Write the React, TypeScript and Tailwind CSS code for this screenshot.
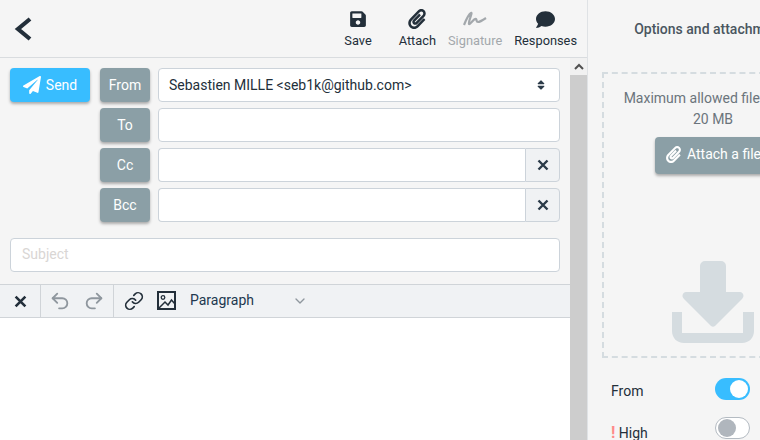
import React from "react"
import { FaComment, FaPaperPlane, FaPaperclip, FaSave, FaSort } from "react-icons/fa"
import { LuChevronDown, LuLink, LuRedo2, LuUndo2 } from "react-icons/lu"

const fieldBorder = "border border-[#ccd3da]"

function HeaderAction({
  icon,
  label,
  disabled,
  className = "",
}: {
  icon: React.ReactNode
  label: string
  disabled?: boolean
  className?: string
}) {
  return (
    <button
      className={`flex flex-col items-center text-[12.8px] ${disabled ? "text-[#a3a8ac]" : "text-[#232f3a]"} ${className}`}
    >
      <span className="flex h-[20px] items-center">{icon}</span>
      <span className="mt-[4px] leading-[16px]">{label}</span>
    </button>
  )
}

function CloseIcon({ size }: { size: number }) {
  return (
    <svg width={size} height={size} viewBox="0 0 12 12" fill="none" stroke="currentColor" strokeWidth="2.4">
      <path d="M1.500 1.500l9 9M10.500 1.500l-9 9" />
    </svg>
  )
}

function FieldLabel({ children }: { children: React.ReactNode }) {
  return (
    <div className="flex h-[34px] w-[50px] shrink-0 items-center justify-center rounded-[4px] bg-[#8b9fa6] text-sm text-white shadow-[0_2px_3px_rgba(0,0,0,0.3)]">
      {children}
    </div>
  )
}

function Row({ label, children }: { label: string; children?: React.ReactNode }) {
  return (
    <div className="flex gap-2">
      <FieldLabel>{label}</FieldLabel>
      <div className="flex h-[34px] flex-1">{children ?? <div className={`flex-1 rounded-[4px] bg-white ${fieldBorder}`} />}</div>
    </div>
  )
}

function ClearableField() {
  return (
    <>
      <div className="flex-1 rounded-l-[4px] border-y border-l border-[#ccd3da] bg-white" />
      <button className="flex w-[35px] items-center justify-center rounded-r-[4px] border border-[#ccd3da] bg-[#f0f2f4] text-[#2b3a48]">
        <CloseIcon size={12} />
      </button>
    </>
  )
}

function Toggle({ on }: { on?: boolean }) {
  return on ? (
    <div className="flex h-[22px] w-[35px] items-center justify-end rounded-full bg-[#38bdff] pr-[2px]">
      <div className="h-[18px] w-[18px] rounded-full bg-white" />
    </div>
  ) : (
    <div className="flex h-[22px] w-[35px] items-center rounded-full border border-[#b4bbc2] bg-white pl-[2px]">
      <div className="h-[18px] w-[18px] rounded-full bg-[#b0b6bd]" />
    </div>
  )
}

export default function App() {
  return (
    <div className="flex h-[440px] w-[760px] overflow-hidden bg-[#f5f5f5] font-['Roboto',sans-serif] text-sm text-[#232f3a]">
      {/* Compose */}
      <div className="flex w-[588px] shrink-0 flex-col border-r border-[#dfe2e5]">
        <div className="flex h-[58px] shrink-0 items-center justify-between border-b border-[#d9dcdf] pr-[10px]">
          <svg width="40" height="58" viewBox="0 0 40 58" className="text-[#232f3a]">
            <path d="M30 19 18 29l12 10" fill="none" stroke="currentColor" strokeWidth="4.2" />
          </svg>
          <div className="flex items-start gap-3 pt-[1px]">
            <HeaderAction className="mr-[15px]" icon={<FaSave size={18} />} label="Save" />
            <HeaderAction icon={<FaPaperclip size={20} />} label="Attach" />
            <HeaderAction
              disabled
              label="Signature"
              icon={
                <svg width="24" height="18" viewBox="0 0 24 18" fill="none" stroke="currentColor" strokeWidth="2.2">
                  <path d="M1 15C3 10 6 4 8 3 10 2 5 12 6 14 7 15 11 8 13 9 14 10 13 12 15 12 17 12 20 10 23 8" />
                </svg>
              }
            />
            <HeaderAction icon={<FaComment size={19} />} label="Responses" />
          </div>
        </div>

        <div className="flex min-h-0 flex-1">
          <div className="flex min-w-0 flex-1 flex-col">
            <div className="flex gap-[10px] px-[10px] pt-[10px]">
              <button className="flex h-[34px] w-[80px] shrink-0 items-center justify-center gap-[5px] rounded-[4px] bg-[#38bdff] text-sm text-white shadow-[0_2px_3px_rgba(0,0,0,0.3)]">
                <FaPaperPlane className="text-[18px]" />
                Send
              </button>
              <div className="flex flex-1 flex-col gap-[6px]">
                <Row label="From">
                  <div className={`flex flex-1 items-center justify-between rounded-[4px] bg-white pl-[10px] pr-[12px] ${fieldBorder}`}>
                    <span>Sebastien MILLE &lt;seb1k@github.com&gt;</span>
                    <FaSort className="text-[12px] text-[#2b3a48]" />
                  </div>
                </Row>
                <Row label="To" />
                <Row label="Cc">
                  <ClearableField />
                </Row>
                <Row label="Bcc">
                  <ClearableField />
                </Row>
              </div>
            </div>

            <div className="px-[10px] pt-[16px]">
              <div className={`flex h-[34px] items-center rounded-[4px] bg-white pb-[2px] pl-[11px] text-[#d9d6d4] ${fieldBorder}`}>
                Subject
              </div>
            </div>

            <div className="mt-[12px] flex h-[34px] shrink-0 items-center border-y border-[#d0d4d8] bg-[#f0f2f4]">
              <div className="flex h-full w-[41px] items-center justify-center border-r border-[#d0d4d8] text-[#232f3a]">
                <CloseIcon size={13} />
              </div>
              <div className="flex h-full w-[73px] items-center justify-center gap-[12px] border-r border-[#d0d4d8] text-[#8f979e]">
                <LuUndo2 size={22} />
                <LuRedo2 size={22} />
              </div>
              <div className="ml-[10px] flex items-center text-[#232f3a]">
                <LuLink size={20} />
                <svg width="20" height="20" viewBox="0 0 20 20" className="ml-[13px]" fill="none" stroke="currentColor">
                  <rect x="1" y="1" width="17" height="17" strokeWidth="2" />
                  <circle cx="6" cy="6.500" r="1.800" strokeWidth="1.300" />
                  <path d="M2 17 8 11l3 3 3.500-5L18 13" strokeWidth="1.500" />
                </svg>
                <span className="mb-[2px] ml-[13px] w-[102px] text-[#22384f]">Paragraph</span>
                <LuChevronDown size={16} className="text-[#8f979e]" />
              </div>
            </div>

            <div className="flex-1 bg-white" />
          </div>

          {/* Scrollbar */}
          <div className="flex w-[17px] shrink-0 flex-col bg-[#f1f1f1]">
            <div className="flex h-[17px] items-center justify-center bg-[#f1f1f1]">
              <svg width="10" height="8" viewBox="0 0 10 8">
                <path d="M1 6 5 2l4 4" fill="none" stroke="#505050" strokeWidth="2" />
              </svg>
            </div>
            <div className="flex-1 bg-[#cdcdcd]" />
          </div>
        </div>
      </div>

      {/* Options panel */}
      <div className="flex w-[250px] shrink-0 flex-col">
        <div className="flex h-[58px] shrink-0 items-center justify-center font-medium text-[#4a5660]">
          Options and attachments
        </div>
        <div className="mx-[14px] mt-[14px] flex h-[286px] shrink-0 flex-col items-center border-2 border-dashed border-[#d5dce0] pt-[14px] text-[#6b747c]">
          <div className="text-center leading-[21px]">
            Maximum allowed file size is
            <br />
            20 MB
          </div>
          <button className="mt-[7px] flex h-[37px] w-[116px] shrink-0 items-center justify-center gap-[5px] rounded-[4px] bg-[#8b9fa6] pb-[3px] text-white shadow-[0_2px_3px_rgba(0,0,0,0.3)]">
            <FaPaperclip className="text-[17px]" />
            Attach a file
          </button>
          <svg width="82" height="82" viewBox="0 0 82 82" className="mt-[87px] shrink-0" fill="#d5dce0">
            <path d="M33 0h16a5 5 0 0 1 5 5v26h14c3 0 5 4 2 7L43 65c-1 1-3 1-4 0L12 38c-3-3-1-7 2-7h14V5a5 5 0 0 1 5-5Z" />
            <path d="M0 51h10v21h61V51h11v19c0 7-5 12-12 12H12C5 82 0 77 0 70Z" />
          </svg>
        </div>
        <div className="mt-[20px] flex shrink-0 items-start justify-between pl-[23px] pr-[88px] text-[#232f3a]">
          <span className="mt-[3px]">From</span>
          <Toggle on />
        </div>
        <div className="mt-[16px] flex shrink-0 items-start justify-between pl-[23px] pr-[88px] text-[#232f3a]">
          <span className="mt-[6px]">
            <span className="text-base font-bold leading-[20px] text-[#ff8a8a]">!</span> High
          </span>
          <Toggle />
        </div>
      </div>
    </div>
  )
}
